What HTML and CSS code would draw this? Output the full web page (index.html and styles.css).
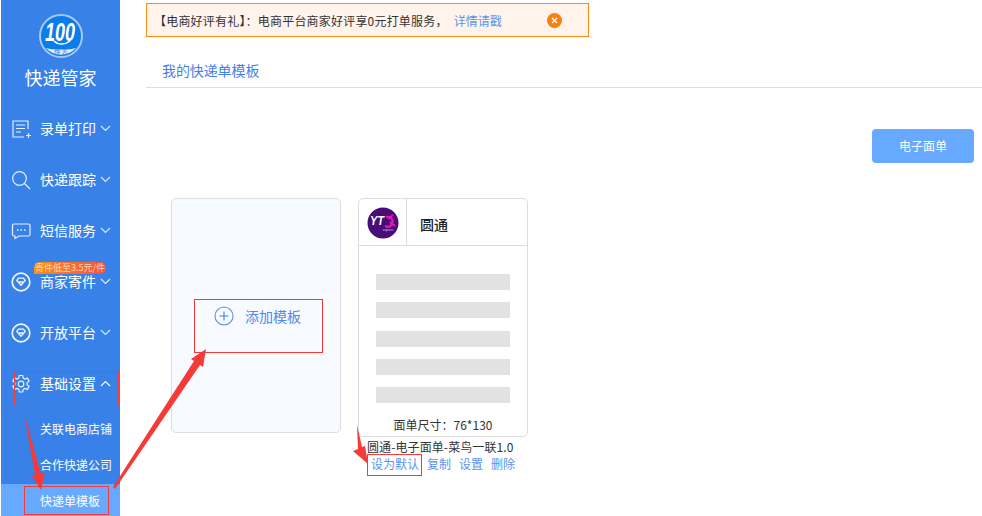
FILE: index.html
```html
<!DOCTYPE html>
<html lang="zh-CN">
<head>
<meta charset="utf-8">
<title>快递管家</title>
<link rel="stylesheet" href="styles.css">
</head>
<body>
<div class="app">
  <aside class="side">
    <div class="brand">
      <svg class="logo" width="44" height="44" viewBox="0 0 44 44">
        <circle cx="22" cy="22" r="21" fill="#0a7de8" stroke="#a9c9f5" stroke-width="2"/>
        <path d="M7 34a20 20 0 0 0 30 0c-4 1-8 1.500-15 1.500S11 35 7 34z" fill="#dfe9f7"/>
        <path d="M15 27c4 4 11 4 16 0" fill="none" stroke="#fff" stroke-width="1.500"/>
        <text class="logo-num" x="6" y="27" textLength="30" lengthAdjust="spacingAndGlyphs">100</text>
        <text class="logo-sub" x="22" y="40" text-anchor="middle">快 表</text>
      </svg>
      <div class="brand-name">快递管家</div>
    </div>
    <nav class="menu">
      <div class="menu-item">
        <svg class="mi" width="20" height="20" viewBox="0 0 20 20"><path d="M17 10V2H2v16h11M5 6h9M5 9.500h9M5 13h5M15 16.500h5M17.500 14v5" fill="none" stroke="#e8f1fd" stroke-width="1.200"/></svg>
        <span class="mt">录单打印</span>
        <svg class="chev" width="11" height="7" viewBox="0 0 11 7"><path d="M1 1l4.500 4.500L10 1" fill="none" stroke="#dce9fb" stroke-width="1.100"/></svg>
      </div>
      <div class="menu-item">
        <svg class="mi" width="20" height="20" viewBox="0 0 20 20"><circle cx="8.500" cy="8.500" r="6.800" fill="none" stroke="#e8f1fd" stroke-width="1.200"/><path d="M13.500 13.500l5.500 5.500" stroke="#e8f1fd" stroke-width="1.200"/></svg>
        <span class="mt">快递跟踪</span>
        <svg class="chev" width="11" height="7" viewBox="0 0 11 7"><path d="M1 1l4.500 4.500L10 1" fill="none" stroke="#dce9fb" stroke-width="1.100"/></svg>
      </div>
      <div class="menu-item">
        <svg class="mi" width="20" height="20" viewBox="0 0 20 20"><path d="M3 3h14.500a1.500 1.500 0 0 1 1.500 1.500v9a1.500 1.500 0 0 1-1.500 1.500H8l-4 2.500V15H3a1.500 1.500 0 0 1-1.500-1.500v-9A1.500 1.500 0 0 1 3 3z" fill="none" stroke="#e8f1fd" stroke-width="1.200"/><path d="M6 9h1.500M9.500 9H11M13 9h1.500" stroke="#e8f1fd" stroke-width="1.500"/></svg>
        <span class="mt">短信服务</span>
        <svg class="chev" width="11" height="7" viewBox="0 0 11 7"><path d="M1 1l4.500 4.500L10 1" fill="none" stroke="#dce9fb" stroke-width="1.100"/></svg>
      </div>
      <div class="menu-item">
        <span class="tag">寄件低至3.5元/件</span>
        <svg class="mi" width="20" height="20" viewBox="0 0 20 20"><circle cx="10" cy="10" r="8.800" fill="none" stroke="#f2f7fe" stroke-width="1.700"/><path d="M5.800 8.500l1.700-2.300h5l1.700 2.300-4.200 4.800zM8 10h4" fill="none" stroke="#f2f7fe" stroke-width="1.300"/></svg>
        <span class="mt">商家寄件</span>
        <svg class="chev" width="11" height="7" viewBox="0 0 11 7"><path d="M1 1l4.500 4.500L10 1" fill="none" stroke="#dce9fb" stroke-width="1.100"/></svg>
      </div>
      <div class="menu-item">
        <svg class="mi" width="20" height="20" viewBox="0 0 20 20"><circle cx="10" cy="10" r="8.800" fill="none" stroke="#f2f7fe" stroke-width="1.700"/><path d="M5.800 8.500l1.700-2.300h5l1.700 2.300-4.200 4.800zM8 10h4" fill="none" stroke="#f2f7fe" stroke-width="1.300"/></svg>
        <span class="mt">开放平台</span>
        <svg class="chev" width="11" height="7" viewBox="0 0 11 7"><path d="M1 1l4.500 4.500L10 1" fill="none" stroke="#dce9fb" stroke-width="1.100"/></svg>
      </div>
      <div class="menu-item">
        <svg class="mi" width="20" height="20" viewBox="0 0 20 20"><path d="M8.300 1.500h3.400l.5 2.600 1.700.9 2.500-.9 1.700 3-2 1.700v1.900l2 1.700-1.700 3-2.500-.9-1.700.9-.5 2.600H8.300l-.5-2.600-1.700-.9-2.500.9-1.700-3 2-1.700V8.800l-2-1.700 1.700-3 2.500.9 1.700-.9z" fill="none" stroke="#e8f1fd" stroke-width="1.200"/><circle cx="10" cy="10" r="2.800" fill="none" stroke="#e8f1fd" stroke-width="1.200"/></svg>
        <span class="mt">基础设置</span>
        <svg class="chev" width="11" height="7" viewBox="0 0 11 7"><path d="M1 6l4.500-4.500L10 6" fill="none" stroke="#fff" stroke-width="1.100"/></svg>
      </div>
      <div class="sub-list">
        <div class="sub-item">关联电商店铺</div>
        <div class="sub-item">合作快递公司</div>
        <div class="sub-item active">快递单模板</div>
      </div>
    </nav>
  </aside>

  <main class="main">
    <div class="notice">
      <span class="notice-text">【电商好评有礼】：电商平台商家好评享0元打单服务，</span>
      <a class="notice-link">详情请戳</a>
      <span class="notice-close">
        <svg width="15" height="15" viewBox="0 0 15 15"><circle cx="7.500" cy="7.500" r="7.500" fill="#f97f0f"/><path d="M5 5l5 5M10 5l-5 5" stroke="#fff" stroke-width="1.200"/></svg>
      </span>
    </div>
    <div class="tabs"><span class="tab">我的快递单模板</span></div>
    <div class="toolbar"><button class="btn">电子面单</button></div>
    <div class="cards">
      <div class="card-add">
        <svg width="20" height="20" viewBox="0 0 20 20"><circle cx="10" cy="10" r="9" fill="none" stroke="#5b8ff0" stroke-width="1.100"/><path d="M5.500 10h9M10 5.500v9" stroke="#3f7de8" stroke-width="1.100"/></svg>
        <span class="add-text">添加模板</span>
      </div>
      <div class="tpl">
        <div class="card">
          <div class="card-head">
            <div class="card-logo">
              <svg width="32" height="32" viewBox="0 0 32 32">
                <circle cx="16" cy="16" r="15.500" fill="#4a0d78"/>
                <text class="yto" x="3" y="18" textLength="14" lengthAdjust="spacingAndGlyphs">YT</text>
                <path d="M19 10c5 -1 8 3 6 7s-5 3-7 2M26 8l-5 4M23 15l5 4" fill="none" stroke="#e815b8" stroke-width="2"/>
                <text class="yto-sub" x="21" y="24" text-anchor="middle">express</text>
              </svg>
            </div>
            <div class="card-name">圆通</div>
          </div>
          <div class="bars">
            <div class="bar"></div>
            <div class="bar"></div>
            <div class="bar"></div>
            <div class="bar"></div>
            <div class="bar"></div>
          </div>
          <div class="size">面单尺寸：76*130</div>
        </div>
        <div class="tpl-name">圆通-电子面单-菜鸟一联1.0</div>
        <div class="actions">
          <a>设为默认</a><a>复制</a><a>设置</a><a>删除</a>
        </div>
      </div>
    </div>
  </main>
</div>
<svg class="marks" width="982" height="516" viewBox="0 0 982 516">
  <g fill="none" stroke="#f53a3a" stroke-width="1">
    <rect x="194.500" y="299.500" width="128" height="53"/>
    <rect x="367.500" y="454.500" width="54" height="21"/>
    <rect x="24.500" y="486.500" width="84" height="28"/>
    <path d="M14.500 405V371.500H118.500V405"/>
  </g>
  <g fill="#f53a3a">
    <polygon points="113,487 194,361 191,359 206,349 203,367 200,365 115,489"/>
    <polygon points="24,413 35,475 32,476 41,490 45,473 41,474"/>
    <polygon points="357,425 358,449 353,451 368,464 365,446 362,447"/>
  </g>
</svg>
</body>
</html>
```
FILE: styles.css
```css
* {
  box-sizing: border-box;
}

html,
body {
  margin: 0;
  height: 516px;
  overflow: hidden;
  background: #fff;
}

body {
  position: relative;
  font-family: "Noto Sans CJK SC", "Liberation Sans", sans-serif;
  font-size: 12px;
  color: #333;
}

.app {
  display: flex;
  height: 516px;
  padding-left: 1px;
}

.side {
  width: 119px;
  flex: none;
  background: #3781e8;
  color: #fff;
}

.brand {
  display: flex;
  flex-direction: column;
  align-items: center;
  padding-top: 14px;
  height: 103px;
}

.logo {
  display: block;
  overflow: visible;
}

.logo-num {
  font-family: "Liberation Sans", sans-serif;
  font-size: 26px;
  font-weight: 700;
  font-style: italic;
  fill: #fff;
}

.logo-sub {
  font-size: 6px;
  fill: #3781e8;
}

.brand-name {
  font-size: 18px;
  line-height: 24px;
  margin-top: 7px;
}

.menu-item {
  position: relative;
  display: flex;
  align-items: center;
  height: 51px;
  padding-left: 10px;
}

.mi {
  flex: none;
  display: block;
}

.mt {
  margin: 0 0 2px 9px;
  font-size: 14px;
  line-height: 14px;
  width: 56px;
  white-space: nowrap;
}

.chev {
  margin-left: 4px;
  flex: none;
}

.tag {
  position: absolute;
  left: 33px;
  top: 6px;
  width: 72px;
  height: 12px;
  border-radius: 6px 6px 6px 0;
  background: linear-gradient(90deg, #fb9116, #f4504a);
  font-size: 9px;
  line-height: 12px;
  text-align: center;
  color: #ffdcb8;
  white-space: nowrap;
}

.sub-list {
  padding-top: 2px;
}

.sub-item {
  height: 36px;
  line-height: 36px;
  padding-left: 39px;
  font-size: 12px;
  color: #fff;
  white-space: nowrap;
}

.sub-item.active {
  background: #66a9ff;
  height: 32px;
  margin-top: 1px;
  line-height: 34px;
}

.main {
  flex: 1;
  min-width: 0;
  padding-left: 26px;
}

.notice {
  display: flex;
  align-items: center;
  width: 443px;
  height: 34px;
  margin-top: 3px;
  padding-left: 7px;
  border: 1px solid #fb8a12;
  background: #fff3ec;
  white-space: nowrap;
  letter-spacing: 0.2px;
}

.notice-text {
  color: #333;
}

.notice-link {
  margin-left: 6px;
  letter-spacing: 0;
  color: #5a93ee;
}

.notice-close {
  display: flex;
  margin-left: 45px;
}

.tabs {
  height: 51px;
  border-bottom: 1px solid #ddd;
  padding: 23px 0 0 16px;
}

.tab {
  display: block;
  font-size: 14px;
  line-height: 20px;
  letter-spacing: -0.1px;
  color: #3f82ec;
}

.toolbar {
  display: flex;
  justify-content: flex-end;
  padding: 41px 8px 0 0;
}

.btn {
  width: 102px;
  height: 34px;
  padding: 0 0 1px;
  border: 0;
  border-radius: 4px;
  background: #66a9ff;
  color: #fff;
  font: inherit;
  font-size: 12px;
}

.cards {
  display: flex;
  align-items: flex-start;
  gap: 17px;
  padding: 35px 0 0 25px;
}

.card-add {
  width: 170px;
  height: 235px;
  display: flex;
  align-items: flex-start;
  padding: 107px 0 0 42px;
  border: 1px solid #ddd;
  border-radius: 5px;
  background: #f7faff;
}

.card-add svg {
  flex: none;
}

.add-text {
  margin-left: 11px;
  font-size: 14px;
  line-height: 20px;
  color: #4f88ee;
}

.tpl {
  width: 170px;
}

.card {
  height: 239px;
  border: 1px solid #ddd;
  border-radius: 5px;
  background: #fff;
}

.card-head {
  display: flex;
  height: 47px;
  border-bottom: 1px solid #ddd;
}

.card-logo {
  width: 48px;
  flex: none;
  padding: 8px 0 0 8px;
  border-right: 1px solid #ddd;
}

.card-logo svg {
  display: block;
}

.yto {
  font-family: "Liberation Sans", sans-serif;
  font-size: 12px;
  font-weight: 700;
  font-style: italic;
  fill: #fff;
}

.yto-sub {
  font-family: "Liberation Sans", sans-serif;
  font-size: 3px;
  fill: #d9c8e8;
}

.card-name {
  padding-left: 13px;
  font-size: 14px;
  font-weight: 500;
  line-height: 50px;
  color: #222;
}

.bars {
  display: flex;
  flex-direction: column;
  gap: 12.300px;
  padding: 28px 17px 0;
}

.bar {
  height: 16px;
  background: #e2e2e2;
}

.size {
  margin-top: 13px;
  font-size: 12px;
  line-height: 18px;
  text-align: center;
  color: #333;
}

.tpl-name {
  margin: 1px -4px 0 9px;
  font-size: 12px;
  line-height: 17px;
  letter-spacing: 0.1px;
  white-space: nowrap;
  color: #333;
}

.actions {
  display: flex;
  gap: 8px;
  padding-left: 13px;
  line-height: 17px;
  color: #5a93ee;
  white-space: nowrap;
}

.marks {
  position: absolute;
  left: 0;
  top: 0;
  pointer-events: none;
}
```
